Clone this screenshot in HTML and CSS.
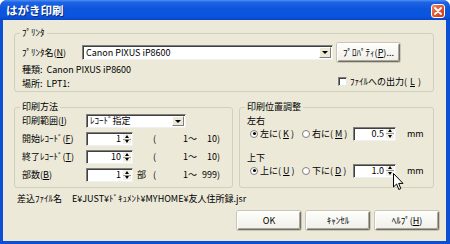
FILE: index.html
```html
<!DOCTYPE html>
<html>
<head>
	<title>はがき印刷</title>
	<link rel="stylesheet" href="styles.css">
</head>
<body>
	<div class="window">
		<div class="titlebar">
			<span class="title">はがき印刷</span>
			<span class="close">
				<svg width="14" height="14" viewBox="0 0 14 14"><path d="M4 4 L10 10 M10 4 L4 10" stroke="#fff" stroke-width="1.8" stroke-linecap="round"/></svg>
			</span>
		</div>

		<div class="client">
			<!-- プリンタ -->
			<fieldset class="group printer">
				<legend>ﾌﾟﾘﾝﾀ</legend>
				<div class="printer-row">
					<label class="lbl-printer">ﾌﾟﾘﾝﾀ名(<u>N</u>)</label>
					<div class="combo combo-printer"><span class="combo-text">Canon PIXUS iP8600</span><span class="drop"></span></div>
					<button class="btn btn-prop">ﾌﾟﾛﾊﾟﾃｨ(<u>P</u>)...</button>
				</div>
				<div class="info">
					<div class="info-lines">
						<div>種類:&nbsp; Canon PIXUS iP8600</div>
						<div>場所:&nbsp; LPT1:</div>
					</div>
					<label class="check"><span class="box"></span>ﾌｧｲﾙへの出力(<u>L</u>)</label>
				</div>
			</fieldset>

			<div class="groups">
				<!-- 印刷方法 -->
				<fieldset class="group method">
					<legend>印刷方法</legend>
					<div class="method-grid">
						<label>印刷範囲(<u>I</u>)</label>
						<div class="combo combo-range"><span class="combo-text">ﾚｺｰﾄﾞ指定</span><span class="drop"></span></div>

						<label>開始ﾚｺｰﾄﾞ(<u>F</u>)</label>
						<div class="range-row">
							<div class="spin spin-rec"><span class="val">1</span><span class="arrows"><i class="up"></i><i class="dn"></i></span></div>
							<span class="unit"></span><span class="paren">(</span><span class="min">1～</span><span class="max">10)</span>
						</div>

						<label>終了ﾚｺｰﾄﾞ(<u>T</u>)</label>
						<div class="range-row">
							<div class="spin spin-rec"><span class="val">10</span><span class="arrows"><i class="up"></i><i class="dn"></i></span></div>
							<span class="unit"></span><span class="paren">(</span><span class="min">1～</span><span class="max">10)</span>
						</div>

						<label>部数(<u>B</u>)</label>
						<div class="range-row">
							<div class="spin spin-rec"><span class="val">1</span><span class="arrows"><i class="up"></i><i class="dn"></i></span></div>
							<span class="unit">部</span><span class="paren">(</span><span class="min">1～</span><span class="max">999)</span>
						</div>
					</div>
				</fieldset>

				<!-- 印刷位置調整 -->
				<fieldset class="group position">
					<legend>印刷位置調整</legend>
					<div class="pos-title">左右</div>
					<div class="pos-row">
						<span class="opt opt-first"><span class="radio on"></span>左に(<u>K</u>)</span>
						<span class="opt"><span class="radio"></span>右に(<u>M</u>)</span>
						<div class="spin spin-mm"><span class="val">0.5</span><span class="arrows"><i class="up"></i><i class="dn"></i></span></div>
						<span class="mm">mm</span>
					</div>
					<div class="pos-title pos-title-2">上下</div>
					<div class="pos-row">
						<span class="opt opt-first"><span class="radio on"></span>上に(<u>U</u>)</span>
						<span class="opt"><span class="radio"></span>下に(<u>D</u>)</span>
						<div class="spin spin-mm"><span class="val">1.0</span><span class="arrows"><i class="up"></i><i class="dn"></i></span></div>
						<span class="mm">mm</span>
					</div>
				</fieldset>
			</div>

			<div class="file-row">
				<span class="file-label">差込ﾌｧｲﾙ名</span>
				<span class="file-path">E¥JUST¥ﾄﾞｷｭﾒﾝﾄ¥MYHOME¥友人住所録.jsr</span>
			</div>

			<div class="buttons">
				<button class="btn">OK</button>
				<button class="btn">ｷｬﾝｾﾙ</button>
				<button class="btn">ﾍﾙﾌﾟ(<u>H</u>)</button>
			</div>
		</div>

		<!-- マウスカーソル -->
		<svg class="cursor" width="11" height="18" viewBox="0 0 11 18">
			<path d="M0.5 0.5 L0.5 14 L3.6 11 L5.8 16.5 L7.8 15.6 L5.7 10.4 L10 10.4 Z" fill="#fff" stroke="#000" stroke-width="1"/>
		</svg>
	</div>
</body>
</html>
```

FILE: styles.css
```css
* {
	box-sizing: border-box;
}

body {
	margin: 0;
	padding: 0;
	font-family: "Noto Sans CJK JP", "Liberation Sans", sans-serif;
	font-size: 9px;
	line-height: 12px;
	color: #000;
	background: #fff;
}

u {
	text-decoration: underline;
}

.window {
	position: relative;
	width: 450px;
	height: 244px;
	display: flex;
	flex-direction: column;
	background: #0b4fd5;
	border-radius: 7px 7px 0 0;
	overflow: hidden;
}

/* タイトルバー */
.titlebar {
	height: 20px;
	flex: none;
	display: flex;
	align-items: center;
	justify-content: space-between;
	padding: 0 5px 0 6px;
	background: linear-gradient(to bottom, #4a90f5 0%, #1f63e2 12%, #0c55dc 45%, #0a55e0 80%, #0a46c4 100%);
}

.title {
	color: #fff;
	font-weight: bold;
	font-size: 11.5px;
	text-shadow: 1px 1px 0 #0a2a80;
}

.close {
	width: 14px;
	height: 14px;
	margin-top: 1px;
	display: flex;
	border: 1px solid #fff;
	border-radius: 3px;
	background: linear-gradient(135deg, #f0896a 0%, #e0532c 50%, #c8401c 100%);
}

.close svg {
	display: block;
	margin: -1px;
}

/* ウィンドウ本体 */
.client {
	flex: 1;
	margin: 0 4px 3px 3px;
	padding: 7px 7px 0 11px;
	background: #ece9d8;
}

.group {
	margin: 0 5px 0 0;
	padding: 4px 7px 0;
	border: 1px solid #d0d0bf;
	border-radius: 3px;
	min-width: 0;
}

.group legend {
	margin-left: -2px;
	padding: 0 2px;
	line-height: 12px;
}

/* プリンタ */
.printer-row {
	display: flex;
	align-items: center;
	height: 19px;
}

.lbl-printer {
	width: 60px;
}

.combo {
	display: flex;
	height: 15px;
	background: #fff;
	border: 1px solid;
	border-color: #7f7f7f #f0f0f0 #f0f0f0 #7f7f7f;
	box-shadow: inset 1px 1px 0 #404040;
}

.combo-printer {
	width: 251px;
}

.combo-text {
	flex: 1;
	padding-left: 3px;
	line-height: 13px;
	white-space: nowrap;
}

.drop {
	width: 12px;
	margin: 1px 1px 1px 0;
	background: #ece9d8;
	border: 1px solid;
	border-color: #fff #808080 #808080 #fff;
	display: flex;
	align-items: center;
	justify-content: center;
}

.drop::after {
	content: "";
	border-left: 3px solid transparent;
	border-right: 3px solid transparent;
	border-top: 3px solid #000;
}

.btn {
	height: 19px;
	width: 64px;
	padding: 0;
	font: inherit;
	color: #000;
	border: 1px solid;
	border-color: #fff #716f64 #716f64 #fff;
	border-radius: 2px;
	background: linear-gradient(to bottom, #fdfdfb, #f0efe8);
	box-shadow: inset -1px -1px 0 #aca899, 0 0 0 1px #c9c6b8;
}

.btn-prop {
	width: 63px;
	margin-left: 4px;
}

.info {
	display: flex;
	margin-top: 1px;
}

.info-lines {
	width: 316px;
	line-height: 14px;
}

.check {
	display: flex;
	align-items: center;
	gap: 3px;
	margin-top: 12px;
	height: 13px;
}

.box {
	width: 9px;
	height: 9px;
	background: #fff;
	border: 1px solid;
	border-color: #7f7f7f #e8e8e8 #e8e8e8 #7f7f7f;
	box-shadow: inset 1px 1px 0 #404040;
}

/* 下段グループ */
.groups {
	display: flex;
	gap: 6px;
	margin: 9px 5px 0 0;
}

.groups .group {
	margin: 0;
}

.method {
	width: 219px;
	flex: none;
	padding-top: 1px;
	padding-bottom: 5px;
}

.method-grid {
	display: grid;
	grid-template-columns: 64px 1fr;
	grid-auto-rows: 14px;
	row-gap: 4px;
	align-items: center;
}

.combo-range {
	width: 100px;
	height: 14px;
}

.combo-range .combo-text {
	line-height: 12px;
}

.range-row {
	display: flex;
	align-items: center;
	height: 14px;
}

.spin {
	display: flex;
	height: 14px;
	background: #fff;
	border: 1px solid;
	border-color: #7f7f7f #f0f0f0 #f0f0f0 #7f7f7f;
	box-shadow: inset 1px 1px 0 #404040;
}

.spin-rec {
	width: 47px;
}

.val {
	flex: 1;
	text-align: right;
	padding-right: 2px;
	line-height: 12px;
}

.arrows {
	width: 8px;
	margin: 1px 1px 1px 0;
	display: flex;
	flex-direction: column;
	background: #f2f1ea;
}

.arrows i {
	flex: 1;
	display: flex;
	align-items: center;
	justify-content: center;
}

.arrows .up {
	border-bottom: 1px solid #9a988c;
}

.arrows .up::after {
	content: "";
	border-left: 2.5px solid transparent;
	border-right: 2.5px solid transparent;
	border-bottom: 3px solid #000;
}

.arrows .dn::after {
	content: "";
	border-left: 2.5px solid transparent;
	border-right: 2.5px solid transparent;
	border-top: 3px solid #000;
}

.unit {
	width: 18px;
	padding-left: 4px;
}

.paren {
	width: 12px;
	padding-left: 2px;
}

.min {
	width: 34px;
	text-align: right;
}

.max {
	width: 23px;
	text-align: right;
}

/* 印刷位置調整 */
.position {
	flex: 1;
	padding-top: 2px;
}

.pos-title {
	line-height: 12px;
}

.pos-title-2 {
	margin-top: 12px;
}

.pos-row {
	display: flex;
	align-items: center;
	height: 13px;
	padding-left: 3px;
}

.opt {
	display: flex;
	align-items: center;
	gap: 2px;
	width: 51px;
	white-space: nowrap;
}

.opt-first {
	width: 52px;
}

.radio {
	width: 8px;
	height: 8px;
	border-radius: 50%;
	border: 1px solid #7f7f7f;
	background: #fff;
	display: flex;
	align-items: center;
	justify-content: center;
}

.radio.on::after {
	content: "";
	width: 3px;
	height: 3px;
	border-radius: 50%;
	background: #000;
}

.spin-mm {
	width: 43px;
}

.mm {
	margin-left: 11px;
}

/* 差込ファイル */
.file-row {
	display: flex;
	margin-top: 5px;
	padding-left: 3px;
	white-space: nowrap;
}

.file-label {
	width: 55px;
}

/* ボタン */
.buttons {
	display: flex;
	justify-content: flex-end;
	gap: 5px;
	margin-top: 6px;
}

.cursor {
	position: absolute;
	left: 393px;
	top: 173px;
}
```
